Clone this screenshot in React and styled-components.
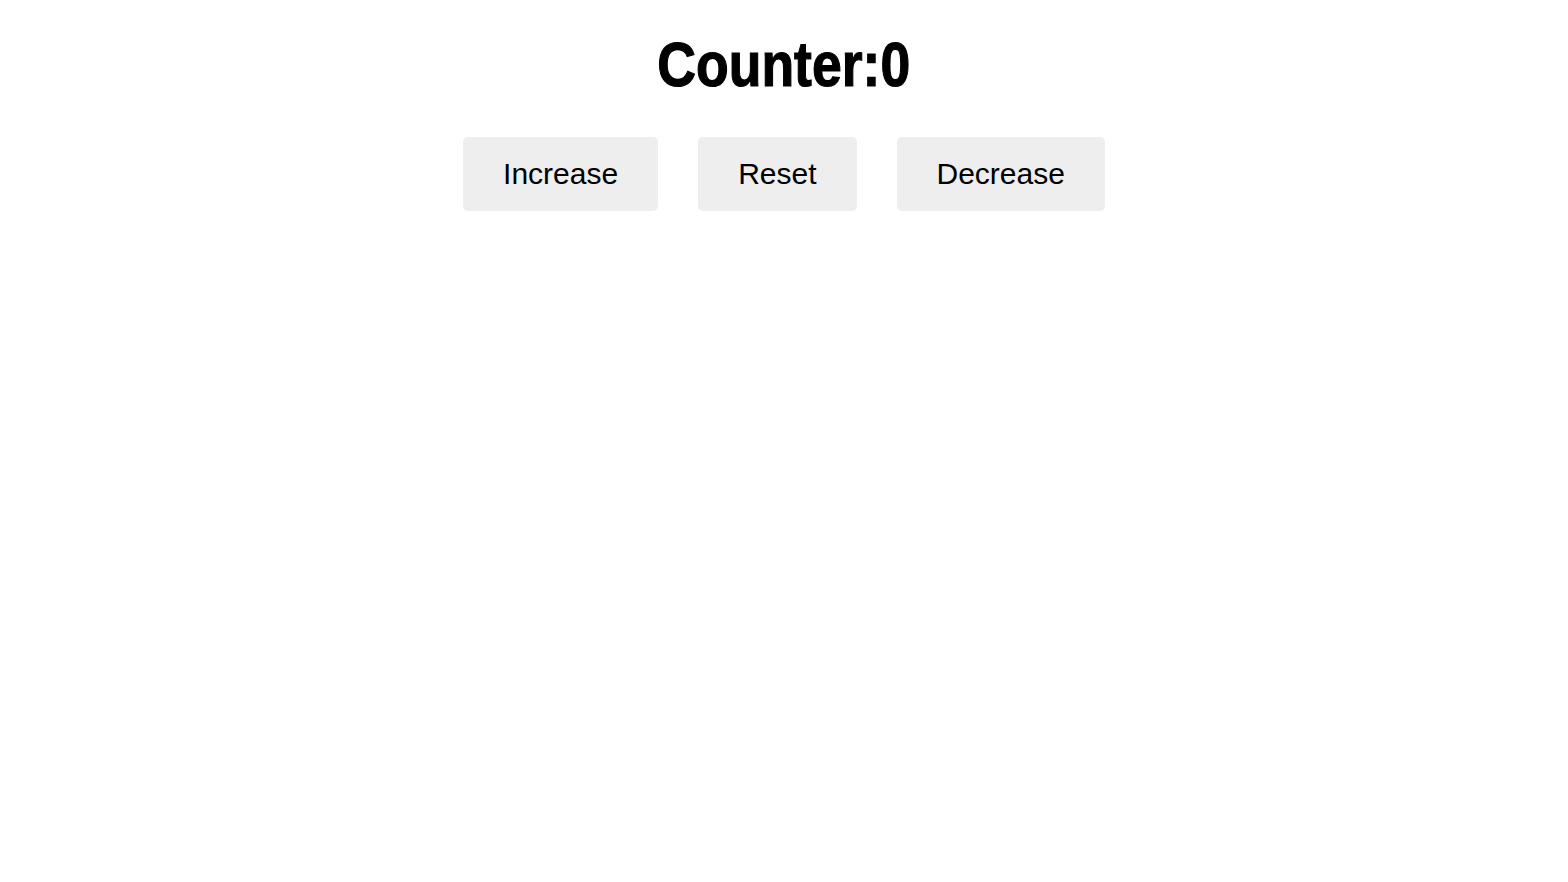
import React, { useState } from 'react'
import styled, { createGlobalStyle } from "styled-components"

const GlobalStyle = createGlobalStyle`
body{
  margin:0;
  background:#fff;
  font-family:"Liberation Sans", Arial, sans-serif;
}
`;

const App = () => {
  const [count, setCount] = useState(0)
  return (
    <Container>
      <GlobalStyle />
      <Title>Counter:{count}</Title>
      <Buttons>
        <Button onClick={() => setCount(count + 1)}>Increase</Button>
        <Button onClick={() => setCount(0)}>Reset</Button>
        <Button onClick={() => setCount(count - 1)}>Decrease</Button>
      </Buttons>
    </Container>
  )
};

const Container = styled.div`
display:flex;
flex-direction:column;
align-items:center;
padding-top:30px;
`;
const Title = styled.h1`
margin:0;
font-family:"Liberation Sans", Arial, sans-serif;
font-weight:bold;
font-size:63px;
line-height:68px;
color:#000;
-webkit-text-stroke:1.2px #000;
transform:scaleX(0.85);
`;
const Buttons = styled.div`
display:flex;
gap:40px;
margin-top:39px;
`;
const Button = styled.button`
font-family:"Liberation Sans", Arial, sans-serif;
font-size:30px;
line-height:33px;
padding:20px 40px 21px;
border:none;
border-radius:5px;
background:#eeeeee;
color:#000;
cursor:pointer;
`;

export default App
